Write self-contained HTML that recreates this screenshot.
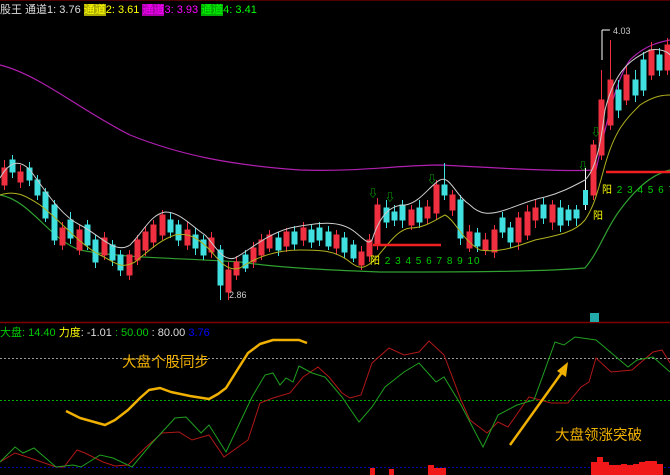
<!DOCTYPE html>
<html><head><meta charset="utf-8"><style>
html,body{margin:0;padding:0;background:#000;width:670px;height:475px;overflow:hidden;font-family:"Liberation Sans","Noto Sans CJK SC",sans-serif}
#w{position:relative;width:670px;height:475px;overflow:hidden}
svg{position:absolute;left:0;top:0}
.t{position:absolute;font-size:11px;white-space:nowrap}
.r{fill:#f03040;stroke:#f03040}
.c{fill:#40e0e0;stroke:#40e0e0}
</style></head><body><div id="w">
<svg width="670" height="475" viewBox="0 0 670 475">
<line x1="0" y1="322.5" x2="670" y2="322.5" stroke="#800000" stroke-width="1.5"/>
<line x1="0" y1="0.5" x2="670" y2="0.5" stroke="#500000"/>
<line x1="0" y1="358.5" x2="670" y2="358.5" stroke="#999" stroke-dasharray="2,2"/>
<line x1="0" y1="400.5" x2="670" y2="400.5" stroke="#0a0" stroke-dasharray="2,2"/>
<line x1="0" y1="467.5" x2="670" y2="467.5" stroke="#00a" stroke-dasharray="2,2"/>
<path d="M0,65 C40,75 80,110 130,135 C180,155 230,165 300,170 C360,172 400,165 440,165 C500,168 560,172 596,170 C605,130 615,80 630,60 C645,45 660,42 670,40" fill="none" stroke="#b020b0" stroke-width="1.2"/>
<path d="M0,195 C30,200 50,240 80,250 C120,258 180,258 240,262 C280,268 330,270 380,272 C450,272 540,272 585,268 C600,250 605,230 620,210 C635,190 650,175 670,170" fill="none" stroke="#30a030" stroke-width="1.2"/>
<g stroke-width="1">
<path class="r" d="M4.5,160V190"/><rect class="r" x="2" y="168" width="5" height="17"/>
<path class="c" d="M12.5,155V178"/><rect class="c" x="10" y="160" width="5" height="12"/>
<path class="r" d="M20.5,165V188"/><rect class="r" x="18" y="172" width="5" height="10"/>
<path class="c" d="M29.5,162V186"/><rect class="c" x="27" y="168" width="5" height="12"/>
<path class="c" d="M37.5,175V200"/><rect class="c" x="35" y="180" width="5" height="15"/>
<path class="c" d="M45.5,188V222"/><rect class="c" x="43" y="192" width="5" height="26"/>
<path class="c" d="M54.5,200V245"/><rect class="c" x="52" y="205" width="5" height="35"/>
<path class="r" d="M62.5,222V250"/><rect class="r" x="60" y="228" width="5" height="17"/>
<path class="c" d="M70.5,212V244"/><rect class="c" x="68" y="220" width="5" height="18"/>
<path class="r" d="M79.5,225V255"/><rect class="r" x="77" y="230" width="5" height="20"/>
<path class="c" d="M87.5,220V250"/><rect class="c" x="85" y="225" width="5" height="20"/>
<path class="c" d="M95.5,235V268"/><rect class="c" x="93" y="240" width="5" height="22"/>
<path class="r" d="M104.5,232V260"/><rect class="r" x="102" y="238" width="5" height="17"/>
<path class="c" d="M112.5,240V266"/><rect class="c" x="110" y="245" width="5" height="15"/>
<path class="c" d="M120.5,250V276"/><rect class="c" x="118" y="255" width="5" height="15"/>
<path class="r" d="M129.5,250V280"/><rect class="r" x="127" y="255" width="5" height="20"/>
<path class="r" d="M137.5,235V265"/><rect class="r" x="135" y="240" width="5" height="20"/>
<path class="r" d="M145.5,226V256"/><rect class="r" x="143" y="232" width="5" height="18"/>
<path class="r" d="M153.5,220V248"/><rect class="r" x="151" y="225" width="5" height="17"/>
<path class="r" d="M162.5,210V240"/><rect class="r" x="160" y="215" width="5" height="20"/>
<path class="c" d="M170.5,212V238"/><rect class="c" x="168" y="220" width="5" height="12"/>
<path class="c" d="M178.5,220V246"/><rect class="c" x="176" y="225" width="5" height="15"/>
<path class="r" d="M187.5,222V250"/><rect class="r" x="185" y="230" width="5" height="15"/>
<path class="c" d="M195.5,228V255"/><rect class="c" x="193" y="235" width="5" height="13"/>
<path class="c" d="M203.5,235V260"/><rect class="c" x="201" y="240" width="5" height="15"/>
<path class="r" d="M211.5,232V258"/><rect class="r" x="209" y="238" width="5" height="14"/>
<path class="c" d="M220.5,245V300"/><rect class="c" x="218" y="250" width="5" height="35"/>
<path class="r" d="M228.5,262V300"/><rect class="r" x="226" y="270" width="5" height="22"/>
<path class="r" d="M236.5,256V280"/><rect class="r" x="234" y="262" width="5" height="13"/>
<path class="c" d="M245.5,250V272"/><rect class="c" x="243" y="255" width="5" height="13"/>
<path class="r" d="M253.5,242V268"/><rect class="r" x="251" y="248" width="5" height="14"/>
<path class="r" d="M261.5,234V260"/><rect class="r" x="259" y="240" width="5" height="15"/>
<path class="r" d="M269.5,230V252"/><rect class="r" x="267" y="235" width="5" height="13"/>
<path class="c" d="M278.5,232V256"/><rect class="c" x="276" y="238" width="5" height="12"/>
<path class="r" d="M286.5,228V252"/><rect class="r" x="284" y="232" width="5" height="14"/>
<path class="c" d="M294.5,226V250"/><rect class="c" x="292" y="232" width="5" height="12"/>
<path class="r" d="M303.5,222V246"/><rect class="r" x="301" y="228" width="5" height="12"/>
<path class="c" d="M311.5,224V248"/><rect class="c" x="309" y="230" width="5" height="12"/>
<path class="c" d="M319.5,222V246"/><rect class="c" x="317" y="228" width="5" height="12"/>
<path class="c" d="M328.5,226V250"/><rect class="c" x="326" y="232" width="5" height="14"/>
<path class="r" d="M336.5,230V254"/><rect class="r" x="334" y="235" width="5" height="13"/>
<path class="c" d="M344.5,232V258"/><rect class="c" x="342" y="238" width="5" height="14"/>
<path class="c" d="M353.5,240V262"/><rect class="c" x="351" y="245" width="5" height="13"/>
<path class="r" d="M361.5,246V270"/><rect class="r" x="359" y="252" width="5" height="13"/>
<path class="r" d="M369.5,234V262"/><rect class="r" x="367" y="240" width="5" height="16"/>
<path class="r" d="M377.5,198V250"/><rect class="r" x="375" y="205" width="5" height="40"/>
<path class="c" d="M386.5,200V228"/><rect class="c" x="384" y="208" width="5" height="14"/>
<path class="c" d="M394.5,205V226"/><rect class="c" x="392" y="212" width="5" height="8"/>
<path class="c" d="M402.5,200V228"/><rect class="c" x="400" y="205" width="5" height="15"/>
<path class="r" d="M411.5,205V230"/><rect class="r" x="409" y="210" width="5" height="15"/>
<path class="c" d="M419.5,200V228"/><rect class="c" x="417" y="208" width="5" height="14"/>
<path class="r" d="M427.5,200V224"/><rect class="r" x="425" y="207" width="5" height="11"/>
<path class="r" d="M436.5,180V220"/><rect class="r" x="434" y="185" width="5" height="28"/>
<path class="c" d="M444.5,163V200"/><rect class="c" x="442" y="185" width="5" height="10"/>
<path class="r" d="M452.5,190V216"/><rect class="r" x="450" y="195" width="5" height="15"/>
<path class="c" d="M460.5,195V245"/><rect class="c" x="458" y="200" width="5" height="38"/>
<path class="r" d="M469.5,225V252"/><rect class="r" x="467" y="232" width="5" height="16"/>
<path class="c" d="M477.5,228V252"/><rect class="c" x="475" y="233" width="5" height="13"/>
<path class="r" d="M485.5,233V255"/><rect class="r" x="483" y="240" width="5" height="10"/>
<path class="r" d="M494.5,225V258"/><rect class="r" x="492" y="230" width="5" height="22"/>
<path class="c" d="M502.5,212V238"/><rect class="c" x="500" y="218" width="5" height="14"/>
<path class="c" d="M510.5,222V248"/><rect class="c" x="508" y="228" width="5" height="14"/>
<path class="r" d="M518.5,212V250"/><rect class="r" x="516" y="218" width="5" height="24"/>
<path class="r" d="M527.5,205V240"/><rect class="r" x="525" y="212" width="5" height="23"/>
<path class="r" d="M535.5,200V228"/><rect class="r" x="533" y="208" width="5" height="12"/>
<path class="c" d="M543.5,198V224"/><rect class="c" x="541" y="205" width="5" height="13"/>
<path class="r" d="M552.5,200V230"/><rect class="r" x="550" y="205" width="5" height="17"/>
<path class="c" d="M560.5,200V232"/><rect class="c" x="558" y="208" width="5" height="17"/>
<path class="c" d="M568.5,205V226"/><rect class="c" x="566" y="210" width="5" height="10"/>
<path class="c" d="M576.5,205V226"/><rect class="c" x="574" y="210" width="5" height="8"/>
<path d="M585.5,168V210" stroke="#fff"/><rect x="583" y="190" width="5" height="15" fill="#40e0e0"/>
<path class="r" d="M593.5,140V200"/><rect class="r" x="591" y="145" width="5" height="50"/>
<path class="r" d="M601.5,70V160"/><rect class="r" x="599" y="100" width="5" height="55"/>
<path class="r" d="M610.5,40V130"/><rect class="r" x="608" y="80" width="5" height="45"/>
<path class="c" d="M618.5,80V118"/><rect class="c" x="616" y="90" width="5" height="20"/>
<path class="r" d="M626.5,65V105"/><rect class="r" x="624" y="75" width="5" height="25"/>
<path class="c" d="M635.5,70V102"/><rect class="c" x="633" y="80" width="5" height="15"/>
<path class="c" d="M643.5,52V96"/><rect class="c" x="641" y="60" width="5" height="30"/>
<path class="r" d="M651.5,42V80"/><rect class="r" x="649" y="50" width="5" height="25"/>
<path class="c" d="M659.5,48V76"/><rect class="c" x="657" y="55" width="5" height="15"/>
<path class="r" d="M667.5,38V75"/><rect class="r" x="665" y="45" width="5" height="25"/>
</g>
<path d="M0,178 C10,160 20,160 30,170 C45,190 60,215 80,225 C100,235 115,255 130,245 C145,230 150,215 165,212 C180,212 190,225 205,235 C215,245 222,262 235,258 C250,250 265,235 290,228 C320,222 340,220 355,232 C365,240 368,245 372,240 C380,215 390,205 405,205 C420,203 430,185 440,180 C450,175 455,195 470,205 C480,215 490,215 505,210 C520,205 530,200 545,197 C560,193 570,188 585,180 C595,170 600,150 605,110 C615,70 630,60 650,50 C660,48 668,52 670,55" fill="none" stroke="#ccc" stroke-width="1"/>
<path d="M0,195 C15,190 25,195 40,205 C60,220 80,245 100,255 C115,262 120,270 135,262 C150,250 160,240 175,235 C190,232 200,240 210,250 C220,262 228,272 240,268 C255,258 275,250 300,250 C320,250 335,250 350,262 C360,270 365,268 372,262 C385,250 395,230 410,228 C425,228 435,220 445,215 C455,220 462,240 480,250 C500,253 515,247 535,240 C560,235 575,232 585,220 C595,205 598,190 605,165 C615,130 625,120 640,105 C655,95 665,95 670,95" fill="none" stroke="#b0b020" stroke-width="1"/>
<line x1="373" y1="245" x2="441" y2="245" stroke="#f02020" stroke-width="2.5"/>
<line x1="606" y1="172" x2="670" y2="172" stroke="#f02020" stroke-width="2.5"/>
<path d="M602,30 L602,60 M602,30 L610,30" stroke="#fff" fill="none"/>
<polyline points="66,411 80,418 105,425 115,420 128,410 140,398 149,390 160,388 171,392 190,396 209,399 218,394 226,388 236,372 248,353 260,344 273,340 299,340 307,343" fill="none" stroke="#f0b000" stroke-width="2.5" stroke-linejoin="round"/>
<polyline points="0,462 15,453 30,458 56,467 64,467 77,450 85,453 103,462 115,466 128,465 145,448 162,433 179,432 192,440 209,435 224,457 248,440 260,403 273,398 290,393 303,377 318,367 329,377 342,393 350,398 361,395 372,363 389,348 404,355 419,352 429,341 444,355 461,400 470,420 487,433 498,422 508,427 529,397 551,403 568,403 581,387 589,382 596,358 611,372 632,370 653,352 662,350 670,363" fill="none" stroke="#b01818" stroke-width="1"/>
<polyline points="0,462 15,447 23,453 34,448 56,467 73,465 81,467 100,455 113,458 132,467 152,443 175,418 186,417 201,433 209,425 226,452 252,397 265,375 273,373 280,385 286,378 293,382 299,366 312,373 325,377 342,397 359,422 372,407 385,387 404,372 419,363 436,382 444,377 461,405 483,447 498,415 517,405 534,400 555,342 564,345 575,337 596,340 628,367 637,360 653,357 670,372" fill="none" stroke="#20a020" stroke-width="1"/>
<path d="M510,445 L563,371" stroke="#f0b000" stroke-width="2.5"/>
<path d="M568,362 L557,371 L566,377 Z" fill="#f0b000"/>
<g fill="#f01818">
<rect x="370" y="468" width="5" height="7"/><rect x="389" y="469" width="5" height="6"/>
<rect x="428" y="465" width="6" height="10"/><rect x="434" y="468" width="6" height="7"/><rect x="440" y="468" width="6" height="7"/>
<rect x="591" y="462" width="6" height="13"/><rect x="597" y="457" width="6" height="18"/><rect x="603" y="462" width="6" height="13"/><rect x="609" y="465" width="6" height="10"/><rect x="615" y="465" width="6" height="10"/><rect x="621" y="464" width="6" height="11"/><rect x="627" y="465" width="6" height="10"/><rect x="633" y="464" width="6" height="11"/><rect x="639" y="462" width="6" height="13"/><rect x="645" y="461" width="6" height="14"/><rect x="651" y="461" width="6" height="14"/><rect x="657" y="464" width="6" height="11"/>
</g>
<rect x="590" y="313" width="9" height="9" fill="#2aa"/>
</svg>
<div class="t" style="left:0;top:1px;color:#ddd">股王 通道1: 3.76 <span style="color:#ff0;"><span style="background:#aa0;color:#ff0">通道</span>2: 3.61</span> <span style="color:#f0f"><span style="background:#a0a">通道</span>3: 3.93</span> <span style="color:#0f0"><span style="background:#0a0">通道</span>4: 3.41</span></div>
<div class="t" style="left:0;top:324px;color:#0c0">大盘: 14.40 <span style="color:#ff0">力度</span><span style="color:#ddd">: -1.01</span> : 50.00 <span style="color:#ddd">: 80.00</span> <span style="color:#00f">3.76</span></div>
<div class="t" style="left:122px;top:351px;color:#f0b000;font-size:14.5px">大盘个股同步</div>
<div class="t" style="left:555px;top:424px;color:#f0b000;font-size:14.5px">大盘领涨突破</div>
<div class="t" style="left:370px;top:252px;color:#0c0;font-size:10px;letter-spacing:1px"><span style="color:#ff0">阳</span> 2 3 4 5 6 7 8 9 10</div>
<div class="t" style="left:602px;top:181px;color:#0c0;font-size:10px;letter-spacing:1px"><span style="color:#ff0">阳</span> 2 3 4 5 6 7 8</div>
<div class="t" style="left:593px;top:207px;color:#ff0;font-size:10px">阳</div>
<div class="t" style="left:613px;top:26px;color:#ccc;font-size:9px">4.03</div>
<div class="t" style="left:229px;top:290px;color:#ccc;font-size:9px">2.86</div>
<div class="t" style="left:368px;top:185px;color:#0c0;font-size:10px">⇩</div>
<div class="t" style="left:385px;top:189px;color:#0c0;font-size:10px">⇩</div>
<div class="t" style="left:427px;top:171px;color:#0c0;font-size:10px">⇩</div>
<div class="t" style="left:578px;top:158px;color:#0c0;font-size:10px">⇩</div>
<div class="t" style="left:591px;top:124px;color:#0c0;font-size:10px">⇩</div>
</div>
</body></html>
